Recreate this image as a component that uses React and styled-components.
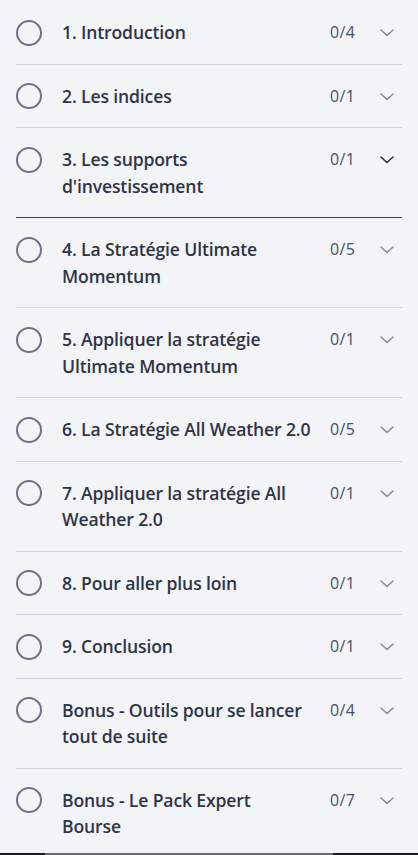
import React from 'react';
import styled, { createGlobalStyle } from 'styled-components';

const GlobalStyle = createGlobalStyle`
    html, body {
        margin: 0;
        padding: 0;
        background: #f3f4f6;
    }
    body {
        font-family: "Open Sans", "Noto Sans", sans-serif;
        -webkit-font-smoothing: antialiased;
    }
`;

// each title is split the way the course sidebar wraps it
const chapters = [
    { lines: ['1. Introduction'], done: 0, total: 4 },
    { lines: ['2. Les indices'], done: 0, total: 1 },
    { lines: ['3. Les supports', "d'investissement"], done: 0, total: 1, active: true },
    { lines: ['4. La Stratégie Ultimate', 'Momentum'], done: 0, total: 5 },
    { lines: ['5. Appliquer la stratégie', 'Ultimate Momentum'], done: 0, total: 1 },
    { lines: ['6. La Stratégie All Weather 2.0'], done: 0, total: 5 },
    { lines: ['7. Appliquer la stratégie All', 'Weather 2.0'], done: 0, total: 1 },
    { lines: ['8. Pour aller plus loin'], done: 0, total: 1 },
    { lines: ['9. Conclusion'], done: 0, total: 1 },
    { lines: ['Bonus - Outils pour se lancer', 'tout de suite'], done: 0, total: 4 },
    { lines: ['Bonus - Le Pack Expert', 'Bourse'], done: 0, total: 7 },
];

const Chevron = ({ active }) => (
    <ChevronIcon width="14" height="8" viewBox="0 0 14 8" $active={active}>
        <path d="M1 1l6 5.5L13 1" fill="none" stroke="currentColor" strokeWidth="1.6" strokeLinecap="round" strokeLinejoin="round" />
    </ChevronIcon>
);

const App = () => {
    return (
        <>
            <GlobalStyle />
            <List>
                {chapters.map((c, i) => (
                    <Row key={i} $active={c.active}>
                        <Check />
                        <Title>
                            {c.lines.map(l => <Line key={l}>{l}</Line>)}
                        </Title>
                        <Count>{c.done}/{c.total}</Count>
                        <Chevron active={c.active} />
                    </Row>
                ))}
            </List>
            <ScrollTrack>
                <ScrollThumb />
            </ScrollTrack>
        </>
    );
};

// Styled Components
const List = styled.div`
    padding-top: 1px;
    display: flex;
    flex-direction: column;
`;

const Row = styled.div`
    display: flex;
    align-items: flex-start;
    margin: 0 16px;
    padding: 18px 0;
    border-bottom: 1px solid ${p => (p.$active ? '#3d4258' : '#d3d5de')};
    cursor: pointer;
`;

const Check = styled.span`
    flex: none;
    box-sizing: border-box;
    width: 26px;
    height: 26px;
    margin-top: 0.5px;
    border: 2px solid #6f7285;
    border-radius: 50%;
`;

const Title = styled.div`
    flex: 1;
    margin: 0 14px 0 20px;
    color: #2f3447;
    font-size: 17.6px;
    font-weight: 600;
    line-height: 26.5px;
    letter-spacing: -0.15px;
`;

const Line = styled.span`
    display: block;
    white-space: nowrap;
`;

const Count = styled.div`
    flex: none;
    width: 36px;
    color: #4b4f62;
    font-size: 16px;
    line-height: 26.5px;
    letter-spacing: 0.3px;
`;

const ChevronIcon = styled.svg`
    flex: none;
    margin: 10px 8px 0 14px;
    color: ${p => (p.$active ? '#2f3447' : '#8a8d9d')};
`;

const ScrollTrack = styled.div`
    position: fixed;
    left: 0;
    right: 0;
    bottom: 0;
    height: 2px;
    background: #1c1c1e;
`;

const ScrollThumb = styled.div`
    margin-left: 45px;
    width: 288px;
    height: 100%;
    background: #6b6b70;
`;

export default App;
